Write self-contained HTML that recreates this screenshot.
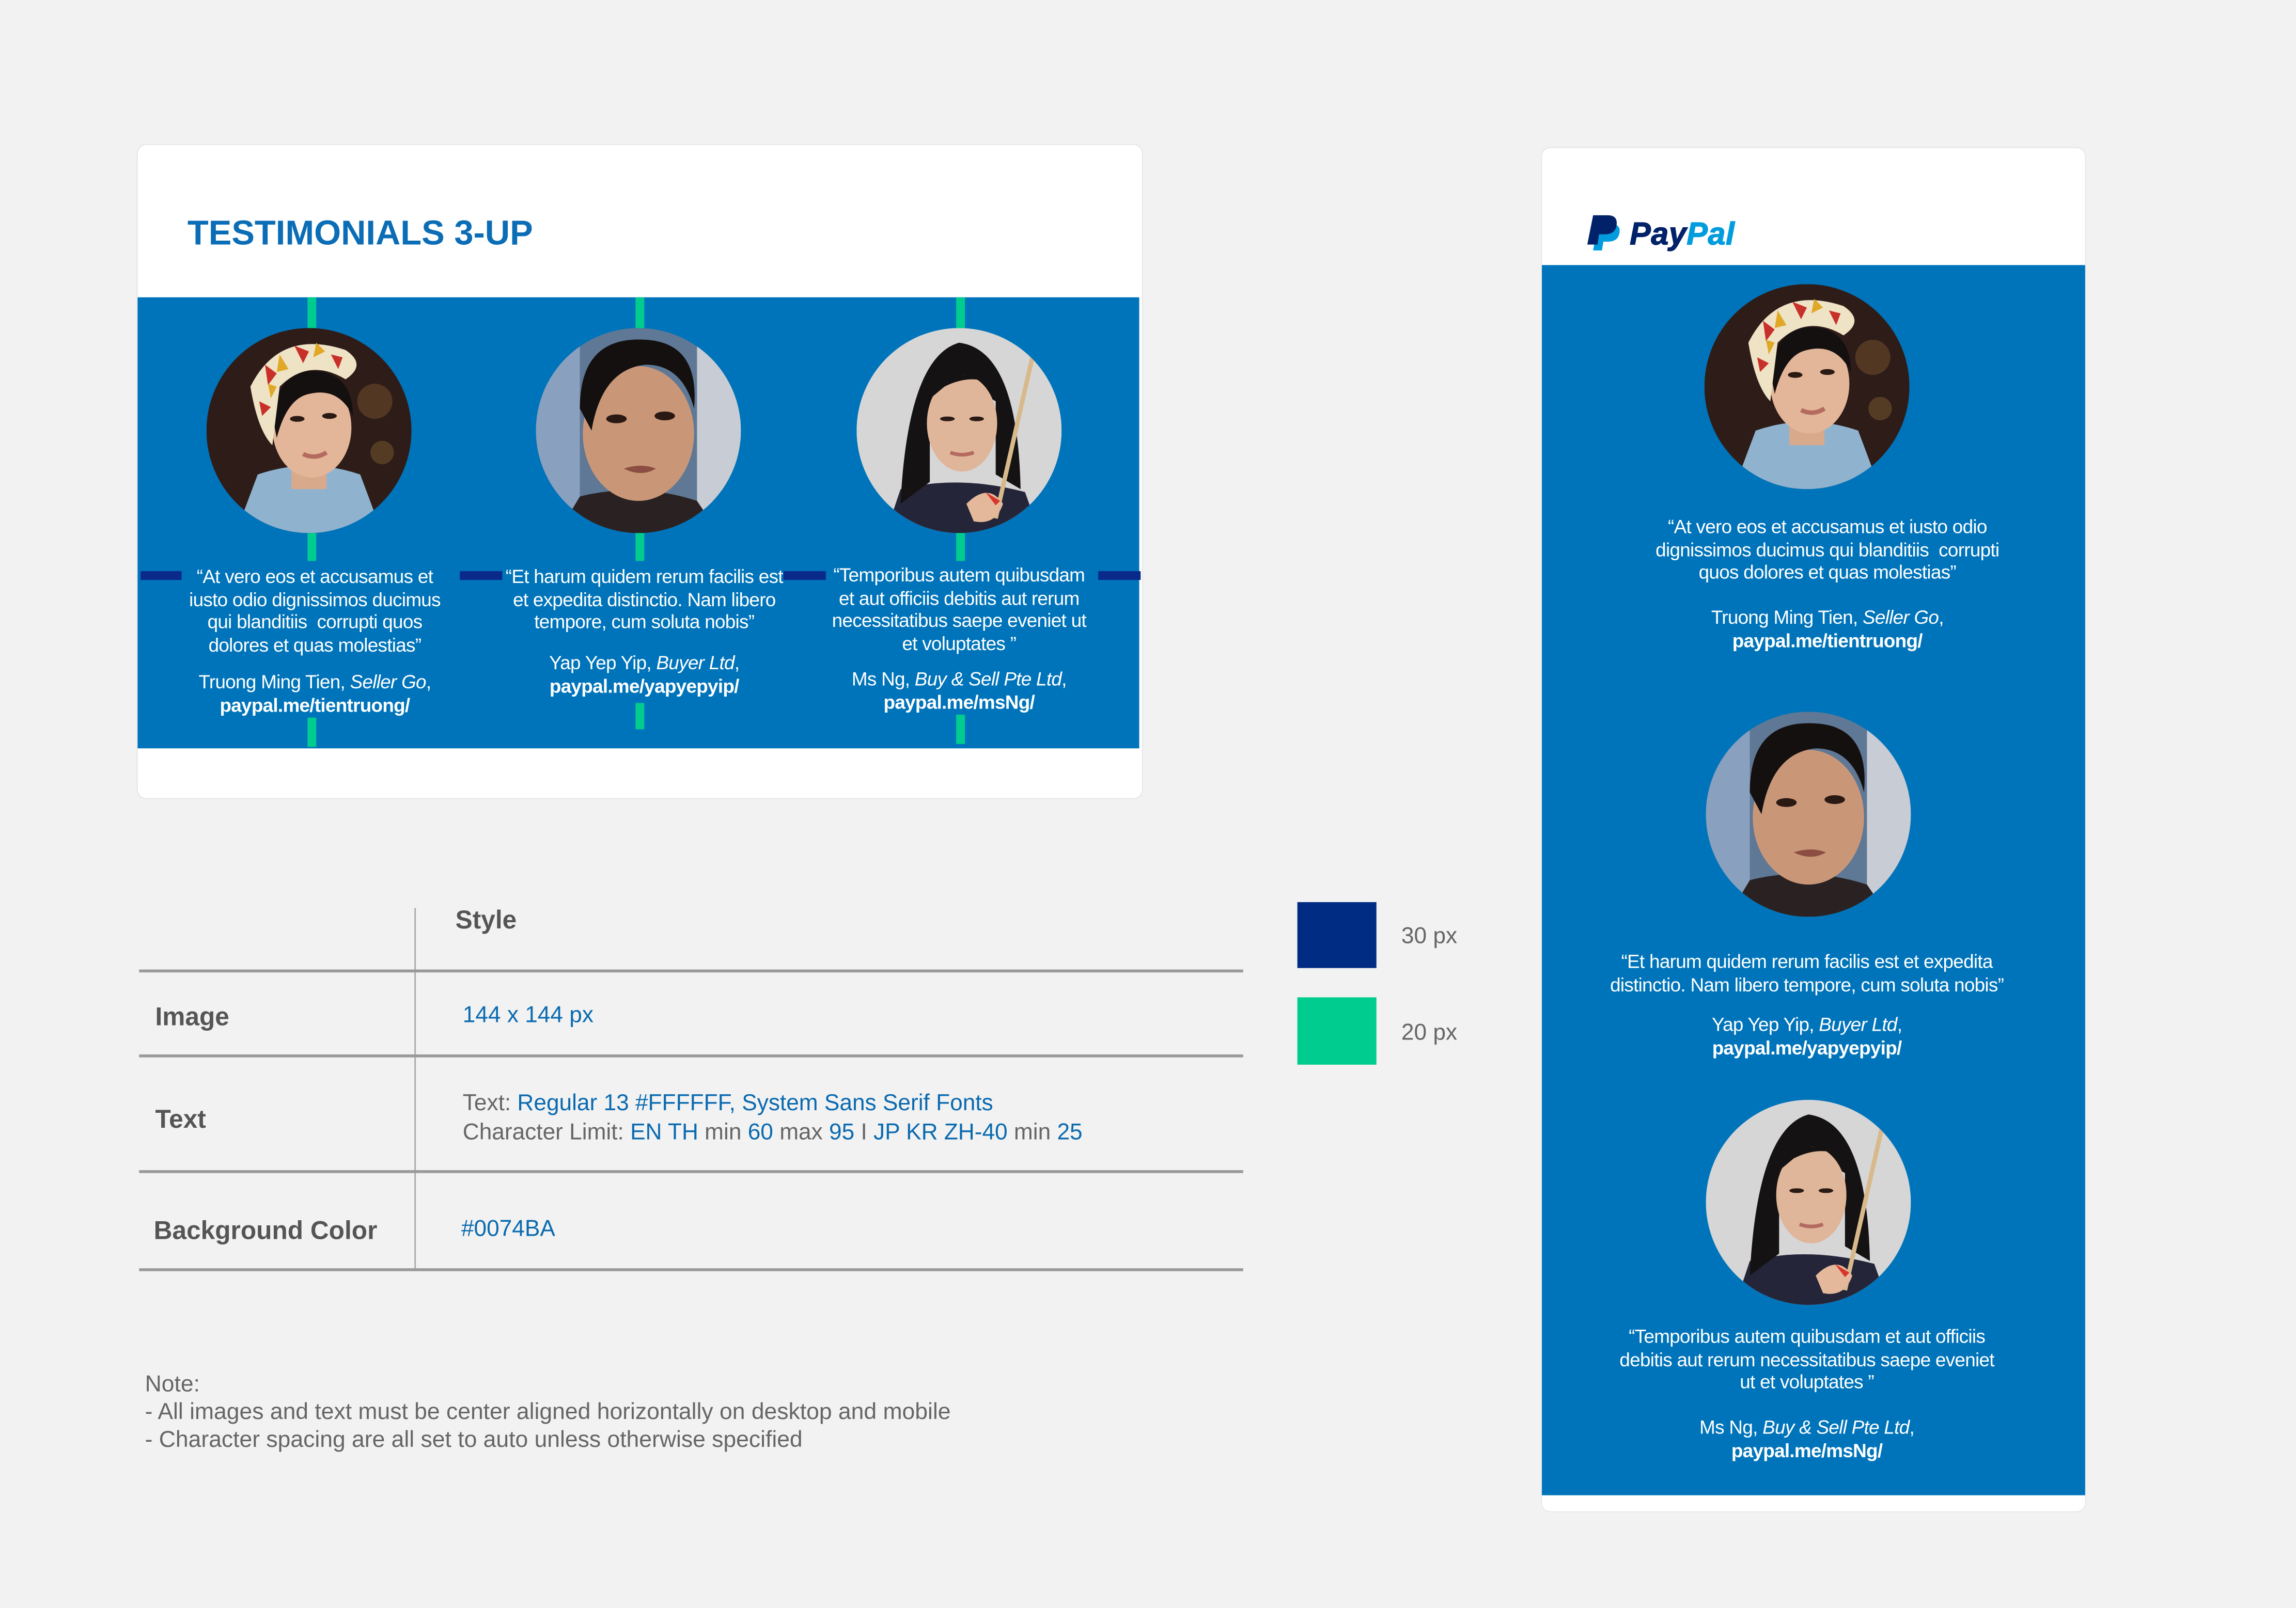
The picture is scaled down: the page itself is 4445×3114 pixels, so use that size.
<!DOCTYPE html>
<html><head><meta charset="utf-8"><style>
html,body{margin:0;padding:0;background:#f2f2f2;}
body{width:4445px;height:3114px;overflow:hidden;position:relative;}
#w{position:absolute;left:0;top:0;width:1568px;height:1098px;transform:scale(2.8348,2.8361);transform-origin:0 0;font-family:"Liberation Sans",Arial,sans-serif;}
.a{position:absolute;}
.card{background:#fff;border-radius:6px;box-shadow:0 0 1px rgba(0,0,0,.15);}
.blue{background:#0074BA;}
.g{background:#00cc8f;width:6px;}
.n{background:#0a2a8a;height:6px;}
.t{color:#fff;font-size:13px;line-height:15.7px;text-align:center;letter-spacing:-0.25px;white-space:nowrap;}
.t b{font-weight:bold;}
.circ{width:140px;height:140px;border-radius:50%;overflow:hidden;}
.hl{background:#9a9a9a;height:2px;left:95px;width:754px;}
.lab{color:#555;font-size:17.5px;font-weight:bold;}
.val{color:#666;font-size:15.6px;white-space:nowrap;}
.val span{color:#0a6ab0;}
</style></head><body><div id="w">

<svg width="0" height="0" style="position:absolute">
<defs>
<symbol id="f1" viewBox="0 0 140 140">
<rect width="140" height="140" fill="#2e1c18"/>
<circle cx="115" cy="50" r="12" fill="#6b4a2a" opacity=".6"/>
<circle cx="120" cy="85" r="8" fill="#7a5a30" opacity=".5"/>
<path d="M20 140 L35 100 Q70 88 105 100 L120 140Z" fill="#8fb3cf"/>
<rect x="58" y="90" width="24" height="20" fill="#d9a98c"/>
<ellipse cx="72" cy="68" rx="27" ry="34" fill="#e3b699"/>
<path d="M45 60 Q50 25 80 30 Q100 35 100 60 Q90 40 70 45 Q55 48 48 75Z" fill="#151010"/>
<path d="M30 40 Q50 0 95 15 Q110 25 95 35 Q70 20 50 40 L45 80 Q35 70 30 40Z" fill="#efe3c6"/>
<path d="M40 25 l8 6 -6 8z M60 12 l10 4 -4 8z M85 18 l8 2 -3 8z M36 50 l8 4 -6 6z" fill="#c8312a"/>
<path d="M50 18 l6 10 -8 2z M75 10 l6 6 -8 4z M42 38 l6 2 -4 8z" fill="#e0a826"/>
<ellipse cx="62" cy="62" rx="5" ry="2" fill="#2a1a14"/><ellipse cx="84" cy="60" rx="5" ry="2" fill="#2a1a14"/>
<path d="M66 86 Q74 90 82 85" stroke="#b56a60" stroke-width="3" fill="none"/>
</symbol>
<symbol id="f2" viewBox="0 0 140 140">
<rect width="140" height="140" fill="#5f7895"/>
<rect x="0" y="0" width="30" height="140" fill="#8aa0bf"/>
<rect x="110" y="0" width="30" height="140" fill="#c8ccd4"/>
<path d="M15 140 L30 115 Q70 105 110 118 L125 140Z" fill="#2a2222"/>
<ellipse cx="70" cy="72" rx="38" ry="46" fill="#c99778"/>
<path d="M30 55 Q30 5 75 8 Q112 10 108 55 Q100 25 75 25 Q45 28 38 70Z" fill="#141010"/>
<ellipse cx="55" cy="62" rx="7" ry="3" fill="#2a1812"/><ellipse cx="88" cy="60" rx="7" ry="3" fill="#2a1812"/>
<path d="M60 96 Q72 92 82 96 Q72 102 60 96Z" fill="#8c4e42"/>
</symbol>
<symbol id="f3" viewBox="0 0 140 140">
<rect width="140" height="140" fill="#d6d6d6"/>
<path d="M20 140 L30 110 Q70 100 115 112 L125 140Z" fill="#25253a"/>
<path d="M30 120 Q35 20 70 10 Q110 15 112 110 L95 100 L95 50 Q70 35 50 55 L50 105Z" fill="#141212"/>
<ellipse cx="72" cy="65" rx="24" ry="33" fill="#e0b69a"/>
<path d="M48 50 Q60 20 96 40 Q80 30 60 40Z" fill="#141212"/>
<line x1="120" y1="20" x2="95" y2="130" stroke="#d7b98a" stroke-width="3"/>
<path d="M75 120 Q90 105 100 120 Q95 135 80 132Z" fill="#e4b89a"/>
<path d="M88 112 l10 6 -3 3z" fill="#d8342c"/>
<ellipse cx="62" cy="62" rx="5" ry="1.6" fill="#2a1a14"/><ellipse cx="82" cy="62" rx="5" ry="1.6" fill="#2a1a14"/>
<path d="M64 85 Q72 88 80 85" stroke="#b56a60" stroke-width="2.5" fill="none"/>
</symbol>
</defs></svg>

<!-- card 1 -->
<div class="a card" style="left:94px;top:99px;width:686px;height:446px"></div>
<div class="a" style="left:128px;top:147px;font-size:23.6px;font-weight:bold;color:#0b6db6">TESTIMONIALS 3-UP</div>
<div class="a blue" style="left:94px;top:203px;width:684px;height:308px"></div>

<div class="a g" style="left:210px;top:203px;height:21px"></div>
<div class="a g" style="left:434px;top:203px;height:21px"></div>
<div class="a g" style="left:653px;top:203px;height:21px"></div>
<div class="a circ" style="left:141px;top:224px"><svg width="140" height="140"><use href="#f1"/></svg></div>
<div class="a circ" style="left:366px;top:224px"><svg width="140" height="140"><use href="#f2"/></svg></div>
<div class="a circ" style="left:585px;top:224px"><svg width="140" height="140"><use href="#f3"/></svg></div>
<div class="a g" style="left:210px;top:364px;height:19px"></div>
<div class="a g" style="left:434px;top:364px;height:19px"></div>
<div class="a g" style="left:653px;top:364px;height:19px"></div>
<div class="a n" style="left:96px;top:390px;width:28px"></div>
<div class="a n" style="left:314px;top:390px;width:29px"></div>
<div class="a n" style="left:535px;top:390px;width:29px"></div>
<div class="a n" style="left:750px;top:390px;width:29px"></div>

<div class="a t" style="left:115px;width:200px;top:386px">“At vero eos et accusamus et<br>iusto odio dignissimos ducimus<br>qui blanditiis&nbsp; corrupti quos<br>dolores et quas molestias”<br><div style="height:9px"></div>Truong Ming Tien, <i>Seller Go</i>,<br><b>paypal.me/tientruong/</b></div>
<div class="a t" style="left:340px;width:200px;top:386px">“Et harum quidem rerum facilis est<br>et expedita distinctio. Nam libero<br>tempore, cum soluta nobis”<br><div style="height:12px"></div>Yap Yep Yip, <i>Buyer Ltd</i>,<br><b>paypal.me/yapyepyip/</b></div>
<div class="a t" style="left:555px;width:200px;top:385px">“Temporibus autem quibusdam<br>et aut officiis debitis aut rerum<br>necessitatibus saepe eveniet ut<br>et voluptates ”<br><div style="height:8px"></div>Ms Ng, <i>Buy &amp; Sell Pte Ltd</i>,<br><b>paypal.me/msNg/</b></div>
<div class="a g" style="left:210px;top:490px;height:20px"></div>
<div class="a g" style="left:434px;top:480px;height:18px"></div>
<div class="a g" style="left:653px;top:488px;height:20px"></div>

<!-- table -->
<div class="a" style="left:283px;top:620px;width:1px;height:248px;background:#aaa"></div>
<div class="a hl" style="top:662px"></div>
<div class="a hl" style="top:720px"></div>
<div class="a hl" style="top:799px"></div>
<div class="a hl" style="top:866px"></div>
<div class="a lab" style="left:311px;top:618px">Style</div>
<div class="a lab" style="left:106px;top:684px">Image</div>
<div class="a lab" style="left:106px;top:754px">Text</div>
<div class="a lab" style="left:105px;top:830px">Background Color</div>
<div class="a val" style="left:316px;top:685px"><span>144 x 144 px</span></div>
<div class="a val" style="left:316px;top:745px">Text: <span>Regular 13 #FFFFFF, System Sans Serif Fonts</span></div>
<div class="a val" style="left:316px;top:765px">Character Limit: <span>EN TH</span> min <span>60</span> max <span>95</span> I <span>JP KR ZH-40</span> min <span>25</span></div>
<div class="a val" style="left:315px;top:831px"><span>#0074BA</span></div>

<div class="a" style="left:886px;top:616px;width:54px;height:45px;background:#002c84"></div>
<div class="a" style="left:886px;top:681px;width:54px;height:46px;background:#00cc8f"></div>
<div class="a val" style="left:957px;top:631px">30 px</div>
<div class="a val" style="left:957px;top:697px">20 px</div>

<div class="a val" style="left:99px;top:936px;line-height:19px;font-size:15.7px">Note:<br>- All images and text must be center aligned horizontally on desktop and mobile<br>- Character spacing are all set to auto unless otherwise specified</div>

<!-- card 2 -->
<div class="a card" style="left:1053px;top:101px;width:371px;height:931px"></div>
<div class="a blue" style="left:1053px;top:181px;width:371px;height:840px"></div>
<svg class="a" style="left:1084px;top:146px" width="24" height="26" viewBox="0 0 24 26">
<path d="M7 7 H16 Q23 7 22 13 Q21 19 14 19 H11 L10 25 H4Z" fill="#009cde"/>
<path d="M4 1 H14 Q21 1 20 8 Q19 14 12 14 H8 L7 21 H0Z" fill="#012169"/>
</svg>
<div class="a" style="left:1113px;top:148px;font-size:21.5px;font-weight:900;font-style:italic;letter-spacing:0.2px;-webkit-text-stroke:0.5px currentColor"><span style="color:#012169">Pay</span><span style="color:#009cde">Pal</span></div>

<div class="a circ" style="left:1164px;top:194px"><svg width="140" height="140"><use href="#f1"/></svg></div>
<div class="a circ" style="left:1165px;top:486px"><svg width="140" height="140"><use href="#f2"/></svg></div>
<div class="a circ" style="left:1165px;top:751px"><svg width="140" height="140"><use href="#f3"/></svg></div>

<div class="a t" style="left:1098px;width:300px;top:352px">“At vero eos et accusamus et iusto odio<br>dignissimos ducimus qui blanditiis&nbsp; corrupti<br>quos dolores et quas molestias”<br><div style="height:15px"></div>Truong Ming Tien, <i>Seller Go</i>,<br><b>paypal.me/tientruong/</b></div>
<div class="a t" style="left:1084px;width:300px;top:649px">“Et harum quidem rerum facilis est et expedita<br>distinctio. Nam libero tempore, cum soluta nobis”<br><div style="height:12px"></div>Yap Yep Yip, <i>Buyer Ltd</i>,<br><b>paypal.me/yapyepyip/</b></div>
<div class="a t" style="left:1084px;width:300px;top:905px">“Temporibus autem quibusdam et aut officiis<br>debitis aut rerum necessitatibus saepe eveniet<br>ut et voluptates ”<br><div style="height:15px"></div>Ms Ng, <i>Buy &amp; Sell Pte Ltd</i>,<br><b>paypal.me/msNg/</b></div>

</div></body></html>
